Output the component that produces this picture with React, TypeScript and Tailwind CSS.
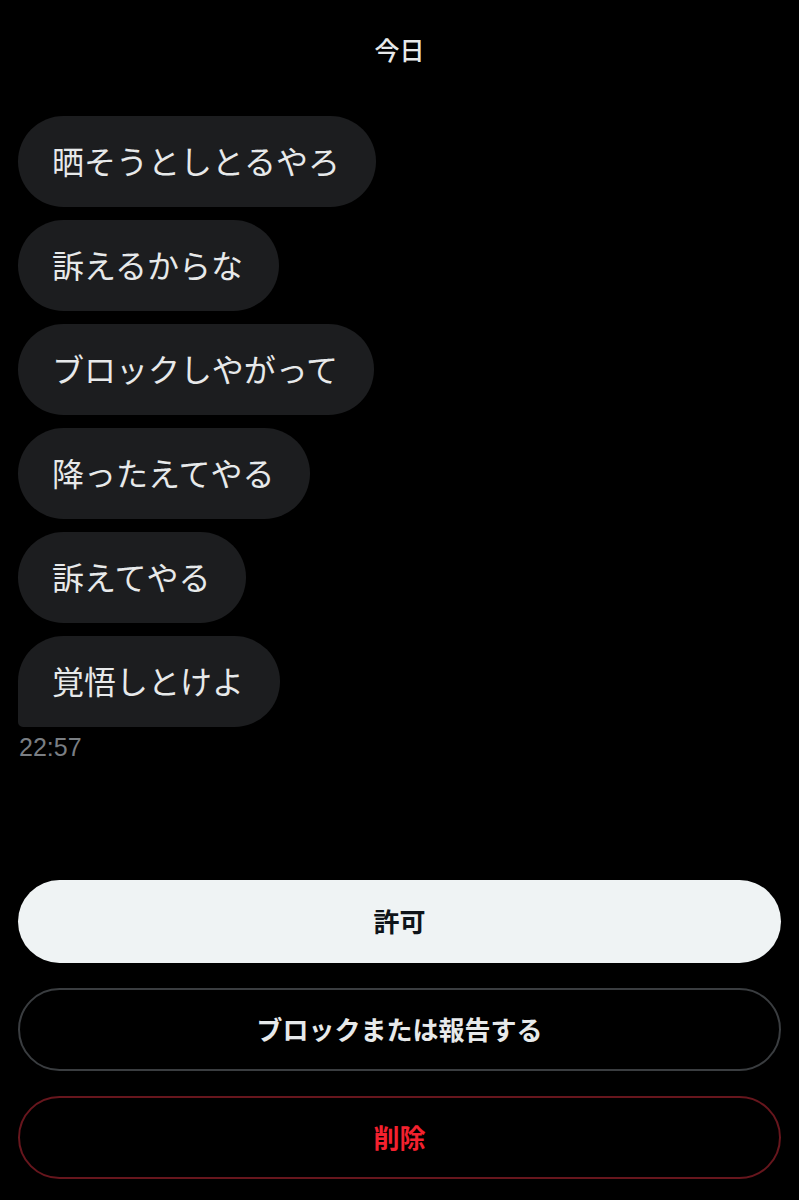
const messages = [
  "晒そうとしとるやろ",
  "訴えるからな",
  "ブロックしやがって",
  "降ったえてやる",
  "訴えてやる",
  "覚悟しとけよ",
];

const font = {
  fontFamily: '"Noto Sans CJK JP", "Noto Sans", sans-serif',
};

export default function App() {
  return (
    <div className="min-h-[1200px] w-full bg-black text-white" style={font}>
      {/* Date header */}
      <div className="pt-[34px] text-center text-[25px] leading-[30px] font-medium text-[#e7e9ea]">
        今日
      </div>

      {/* Messages */}
      <div className="mt-[52px] flex flex-col items-start gap-[13px] px-[18px]">
        {messages.map((m, i) => (
          <div
            key={i}
            className={
              "h-[91px] flex items-center pl-[34px] pr-[36px] pb-[3px] bg-[#1c1d1f] text-[32px] leading-none text-[#e7e9ea] rounded-[46px] " +
              (i === messages.length - 1 ? "rounded-bl-[5px]" : "")
            }
          >
            {m}
          </div>
        ))}
      </div>
      <div
        className="mt-[6px] px-[19px] text-[25px] leading-[28px] text-[#7a7e83]"
        style={{ fontFamily: '"Liberation Sans", Arial, sans-serif' }}
      >
        22:57
      </div>

      {/* Actions */}
      <div className="mt-[119px] flex flex-col gap-[25px] px-[18px]">
        <button className="h-[83px] w-full rounded-full bg-[#eff3f4] pb-[3px] text-[26px] font-bold text-[#0f1419]">
          許可
        </button>
        <button className="h-[83px] w-full rounded-full border-2 border-[#3a3d40] pb-[3px] text-[26px] font-bold text-[#e7e9ea]">
          ブロックまたは報告する
        </button>
        <button className="h-[83px] w-full rounded-full border-2 border-[#67161d] pb-[3px] text-[26px] font-bold text-[#f4212e]">
          削除
        </button>
      </div>
    </div>
  );
}
